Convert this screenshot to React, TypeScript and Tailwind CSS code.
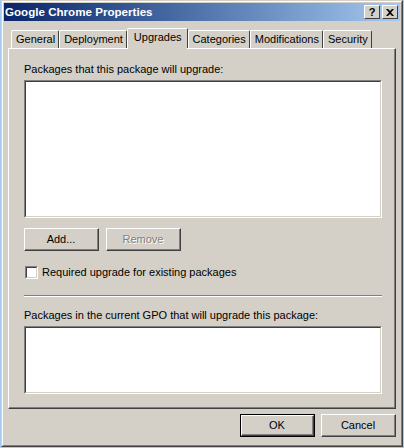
import React from "react";

const face = "bg-[#D4D0C8]";

function Btn({ children, disabled, def }: { children: React.ReactNode; disabled?: boolean; def?: boolean }) {
  return (
    <div className={`h-[23px] w-[75px] ${def ? "border border-black" : ""}`}>
      <div className="h-full w-full border-t border-l border-white border-r border-b border-r-[#404040] border-b-[#404040]">
        <div className={`h-full w-full flex items-center justify-center border-r border-b border-[#808080] ${face} ${disabled ? "text-[#808080] [text-shadow:1px_1px_0_#fff]" : "text-black"}`}>
          {children}
        </div>
      </div>
    </div>
  );
}

function Sunken({ className }: { className: string }) {
  return (
    <div className={`border-t border-l border-[#808080] border-r border-b border-r-white border-b-white ${className}`}>
      <div className="h-full w-full border-t border-l border-[#404040] border-r border-b border-r-[#D4D0C8] border-b-[#D4D0C8] bg-white" />
    </div>
  );
}

const tabs = ["General", "Deployment", "Upgrades", "Categories", "Modifications", "Security"];

export default function App() {
  return (
    <div className="w-[404px] h-[448px] bg-[#a6caf0] pl-px pr-px pb-px" style={{ fontFamily: '"Liberation Sans", Arial, sans-serif' }}>
      <div className="h-full w-full border-t border-l border-[#D4D0C8] border-r border-b border-r-[#404040] border-b-[#404040]">
        <div className={`h-full w-full border-t border-l border-white border-r border-b border-r-[#808080] border-b-[#808080] ${face} p-px text-[11px] flex flex-col`}>
          {/* title bar */}
          <div className="h-[18px] shrink-0 flex items-center justify-between pl-[1px] pr-[2px] bg-gradient-to-r from-[#0A246A] to-[#A6CAF0]">
            <span className="text-white font-bold text-[11.6px]">Google Chrome Properties</span>
            <div className="flex">
              <div className="w-[16px] h-[14px] border-t border-l border-white border-r border-b border-r-[#404040] border-b-[#404040] bg-[#D4D0C8] flex items-center justify-center font-bold text-[11px] leading-none">?</div>
              <div className="w-[16px] h-[14px] ml-[2px] border-t border-l border-white border-r border-b border-r-[#404040] border-b-[#404040] bg-[#D4D0C8] flex items-center justify-center">
                <svg width="8" height="7" viewBox="0 0 8 7"><path d="M0 0h2l2 2 2-2h2L5 3.5 8 7H6L4 5 2 7H0l3-3.5z" fill="#000" /></svg>
              </div>
            </div>
          </div>

          {/* tabs */}
          <div className="relative z-10 pl-[7px] flex items-end h-[27px] shrink-0">
            {tabs.map((t) => {
              const sel = t === "Upgrades";
              return (
                <div
                  key={t}
                  className={`relative ${sel ? "h-[20px] z-10 pb-[2px] pl-[6px] pr-[5px]" : "h-[18px] pl-[4px] pr-[3px]"} ${face} border-t border-l border-white border-r border-r-[#404040] rounded-t-[2px] flex items-center`}
                >
                  {t}
                  {sel && <div className={`absolute left-0 right-0 -bottom-[1px] h-[2px] ${face}`} />}
                </div>
              );
            })}
          </div>

          {/* panel */}
          <div className="mx-[4px] flex-1 border-t border-l border-white border-r border-b border-r-[#404040] border-b-[#404040]">
            <div className="h-full border-r border-b border-[#808080] pl-[15px] pt-[14px] flex flex-col">
              <div className="h-[13px] leading-[13px]">Packages that this package will upgrade:</div>
              <Sunken className="mt-[4px] h-[138px] w-[358px]" />
              <div className="flex gap-[7px] mt-[10px]">
                <Btn>Add...</Btn>
                <Btn disabled>Remove</Btn>
              </div>
              <div className="flex items-center mt-[15px] leading-[13px]">
                <div className="w-[13px] h-[13px] ml-px border-t border-l border-[#808080] border-r border-b border-r-white border-b-white">
                  <div className="w-full h-full border-t border-l border-[#404040] border-r border-b border-r-[#D4D0C8] border-b-[#D4D0C8] bg-white" />
                </div>
                <span className="ml-[4px]">Required upgrade for existing packages</span>
              </div>
              <div className="mt-[16px] h-[2px] w-[358px] border-t border-[#808080] border-b border-b-white" />
              <div className="mt-[12px] h-[13px] leading-[13px]">Packages in the current GPO that will upgrade this package:</div>
              <Sunken className="mt-[4px] h-[68px] w-[358px]" />
            </div>
          </div>

          {/* footer */}
          <div className="flex justify-end gap-[6px] pr-[4px] pt-[5px] pb-[7px] shrink-0">
            <Btn def>OK</Btn>
            <Btn>Cancel</Btn>
          </div>
        </div>
      </div>
    </div>
  );
}
